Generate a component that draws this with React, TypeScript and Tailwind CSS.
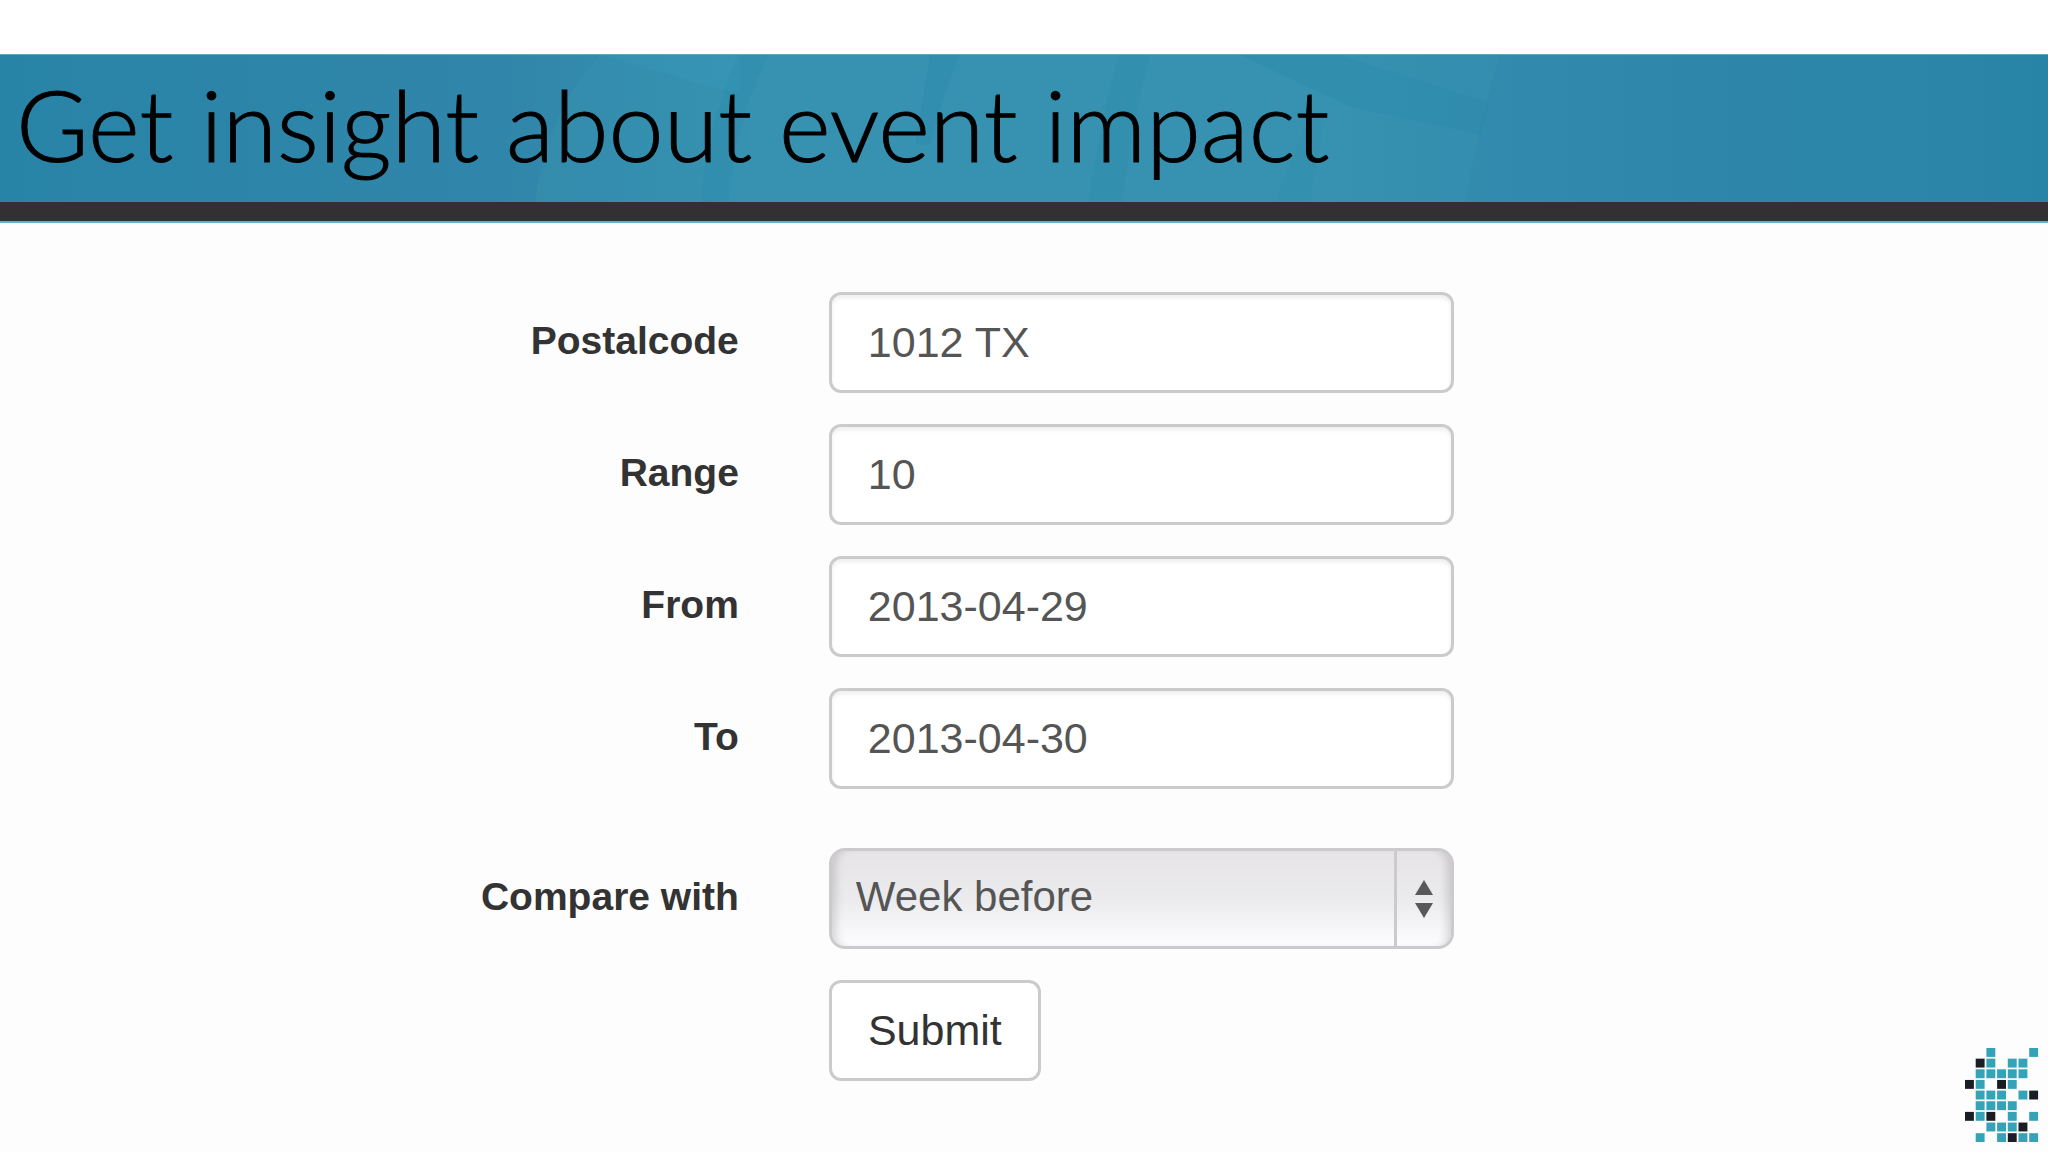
import React from 'react';

const LOGO_ROWS = [
  '..T...T',
  '.KT.TT.',
  '.TTTTT.',
  'KT.KT..',
  '.TTT.TK',
  '.TTTT..',
  'KTK.T.T',
  '..TTTK.',
  '.T.TKTT',
];

const inputClass =
  'h-[101px] w-full rounded-xl border-3 border-[#cccacd] bg-white pl-9 pr-6 text-[43px] text-[#555] shadow-[inset_0_3px_4px_rgba(0,0,0,0.07)] outline-none';
const labelClass = 'pb-0.5 text-right text-[39px] font-bold text-[#333]';

const fields = [
  { id: 'postalcode', label: 'Postalcode', value: '1012 TX' },
  { id: 'range', label: 'Range', value: '10' },
  { id: 'from', label: 'From', value: '2013-04-29' },
  { id: 'to', label: 'To', value: '2013-04-30' },
];

const HeaderBackdrop: React.FC = () => (
  <svg className="absolute inset-0 h-full w-full" viewBox="0 0 2048 148" preserveAspectRatio="none" aria-hidden="true">
    <defs>
      <linearGradient id="band" x1="0" x2="1" y1="0" y2="0">
        <stop offset="0" stopColor="#2884a7" />
        <stop offset="0.24" stopColor="#3086aa" />
        <stop offset="0.36" stopColor="#348fb0" />
        <stop offset="0.65" stopColor="#348fb0" />
        <stop offset="0.78" stopColor="#3088ac" />
        <stop offset="1" stopColor="#2884a7" />
      </linearGradient>
    </defs>
    <rect width="2048" height="148" fill="url(#band)" />
    <path d="M600 0H1500Q1478 70 1465 148H535Q545 60 600 0Z" fill="#43a3b5" fillOpacity="0.16" />
    <path d="M600 0L740 40V0Z" fill="#3b9abb" fillOpacity="0.25" />
    <path d="M738 0H768Q735 70 728 148H700Q708 70 738 0Z" fill="#2282a6" fillOpacity="0.16" />
    <path d="M930 0H960Q940 50 930 90H915Z" fill="#2282a6" fillOpacity="0.18" />
    <path d="M1118 0H1150Q1132 70 1122 148H1088Q1100 70 1118 0Z" fill="#2282a6" fillOpacity="0.16" />
    <path d="M1310 60H1325L1310 148H1275Z" fill="#2282a6" fillOpacity="0.12" />
    <path d="M1240 0H1340L1490 48L1480 80L1350 52Z" fill="#2282a6" fillOpacity="0.2" />
  </svg>
);

const Logo: React.FC = () => (
  <svg className="h-[94px] w-[74px]" viewBox="0 0 74 94" aria-hidden="true">
    {LOGO_ROWS.map((row, y) =>
      row.split('').map((cell, x) =>
        cell === '.' ? null : (
          <rect
            key={`${x}-${y}`}
            x={x * 10.7}
            y={y * 10.65}
            width="8.9"
            height="8.9"
            fill={cell === 'K' ? '#1a1d24' : '#35a2b8'}
          />
        )
      )
    )}
  </svg>
);

const App: React.FC = () => {
  return (
    <div className="flex min-h-screen flex-col bg-[#fdfdfd] font-['Liberation_Sans',Arial,sans-serif]">
      <header className="border-t-[54px] border-white">
        <div className="relative h-[148px] border-t border-[#5fa9c0]">
          <HeaderBackdrop />
          <h1 className="relative pl-4 font-[Lato,sans-serif] text-[99px] leading-[138px] font-light whitespace-nowrap text-black [-webkit-text-stroke:1px_black]">
            Get insight about event impact
          </h1>
        </div>
        <div className="h-[21px] border-b-2 border-[#5cb0cb] bg-[#333032]" />
      </header>

      <main className="flex flex-1">
        <form
          className="grid flex-1 grid-cols-[37.6%_31.8%] content-start items-center gap-x-[90px] gap-y-[31px] pt-[69px]"
          onSubmit={(e) => e.preventDefault()}
        >
          {fields.map((field) => (
            <React.Fragment key={field.id}>
              <label htmlFor={field.id} className={labelClass}>
                {field.label}
              </label>
              <input id={field.id} type="text" defaultValue={field.value} className={inputClass} />
            </React.Fragment>
          ))}

          <label htmlFor="compare" className={`${labelClass} mt-7`}>
            Compare with
          </label>
          <div className="relative mt-7">
            <select
              id="compare"
              className="block h-[101px] w-full appearance-none rounded-2xl border-3 border-[#cccacd] bg-linear-to-b from-[#e6e4e7] via-[#ebeaec] to-[#fdfcfe] pb-1 pl-6 pr-16 text-[42px] text-[#555] shadow-[inset_10px_0_8px_-6px_rgba(0,0,0,0.14),inset_-10px_0_8px_-6px_rgba(0,0,0,0.14)] outline-none"
            >
              <option>Week before</option>
            </select>
            <div className="pointer-events-none absolute inset-y-[3px] right-[3px] flex w-[57px] items-center justify-center border-l-3 border-[#cccacd]">
              <svg className="h-[38px] w-5" viewBox="0 0 20 38" fill="#59585a" aria-hidden="true">
                <path d="M10 0L19 15H1Z" />
                <path d="M1 23H19L10 38Z" />
              </svg>
            </div>
          </div>

          <button
            type="submit"
            className="col-start-2 h-[101px] w-[212px] rounded-xl border-3 border-[#cccacd] bg-white text-[43px] text-[#333]"
          >
            Submit
          </button>
        </form>
        <div className="self-end pr-[9px] pb-[10px]">
          <Logo />
        </div>
      </main>
    </div>
  );
};

export default App;
